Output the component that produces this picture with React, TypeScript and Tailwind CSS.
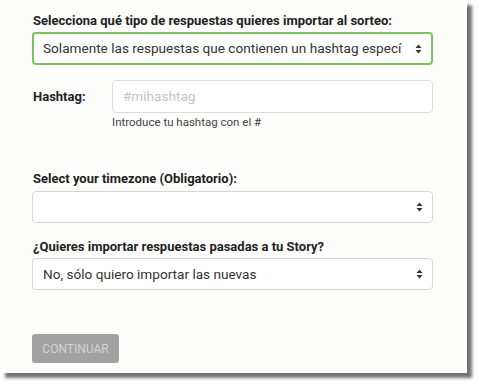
import React from "react";

function Arrows() {
  return (
    <svg width="7" height="10" viewBox="0 0 7 10" className="shrink-0 ml-auto">
      <path d="M3.5 0.5 L6.5 4 L0.5 4 Z" fill="#333" />
      <path d="M3.5 9.5 L6.5 6 L0.5 6 Z" fill="#333" />
    </svg>
  );
}

function Select({ text, active, h }: { text?: string; active?: boolean; h: string }) {
  return (
    <div
      className={`flex items-center w-[401px] rounded-[4px] bg-white pr-[9px] ${h} ${
        active ? "border-2 border-[#79c25d] pl-[9px]" : "border border-[#d6d6d6] pl-[10px]"
      }`}
    >
      <div className="w-[362px] overflow-hidden whitespace-nowrap text-[13.6px] text-[#333]">
        {text}
      </div>
      <Arrows />
    </div>
  );
}

export default function App() {
  return (
    <div className="w-[479px] h-[389px] bg-white" style={{ fontFamily: "Roboto, 'Noto Sans', sans-serif" }}>
      <div className="w-[467px] h-[373px] bg-[#fdfdfc] shadow-[5px_5px_3px_rgba(0,0,0,0.55)] pl-[32px] pt-[13px] flex flex-col">
        <div className="text-[13px] leading-[16px] font-bold text-[#222] pl-[1px] mb-[3px]">
          Selecciona qué tipo de respuestas quieres importar al sorteo:
        </div>
        <Select active h="h-[33px]" text="Solamente las respuestas que contienen un hashtag especí" />
        <div className="flex items-center mt-[15px]">
          <div className="w-[80px] pl-[1px] text-[13px] font-bold text-[#222]">Hashtag:</div>
          <div className="w-[321px] h-[33px] border border-[#dcdcdc] rounded-[4px] bg-white flex items-center pl-[10px] text-[13.6px] text-[#c4c4c4]">
            #mihashtag
          </div>
        </div>
        <div className="ml-[80px] mt-[3px] text-[11.5px] leading-[12px] text-[#444]">
          Introduce tu hashtag con el #
        </div>
        <div className="mt-[43px] text-[13px] leading-[16px] font-bold text-[#222] pl-[1px] mb-[4px]">
          Select your timezone (Obligatorio):
        </div>
        <Select h="h-[32px]" />
        <div className="mt-[16px] text-[13px] leading-[16px] font-bold text-[#222] pl-[1px] mb-[3px]">
          ¿Quieres importar respuestas pasadas a tu Story?
        </div>
        <Select h="h-[32px]" text="No, sólo quiero importar las nuevas" />
        <div className="mt-[44px] w-[87px] h-[29px] rounded-[3px] bg-[#a2a2a2] text-[#d2d2d2] text-[12px] flex items-center justify-center">
          CONTINUAR
        </div>
      </div>
    </div>
  );
}
